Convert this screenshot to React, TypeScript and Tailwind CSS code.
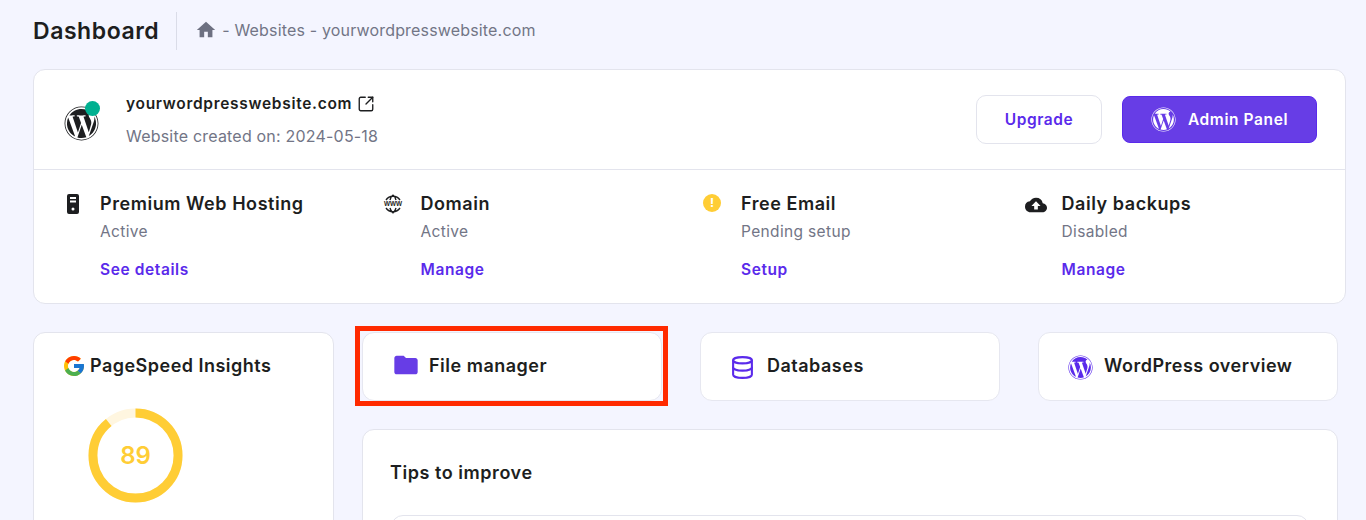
import { FaWordpress } from "react-icons/fa";
import { FcGoogle } from "react-icons/fc";
import { MdHome, MdCloudUpload, MdFolder } from "react-icons/md";
import { Database, SquareArrowOutUpRight } from "lucide-react";

function Server() {
  return (
    <svg width="18" height="20" viewBox="0 0 18 20">
      <path fill="#1d1e20" fillRule="evenodd" d="M5 0h8a2 2 0 0 1 2 2v16a2 2 0 0 1-2 2H5a2 2 0 0 1-2-2V2a2 2 0 0 1 2-2zm1 3v2h6V3H6zm0 3.5v2h6v-2H6zM9 13.5a1.5 1.5 0 1 0 0 3 1.5 1.5 0 0 0 0-3z" />
    </svg>
  );
}

function Www() {
  return (
    <svg width="22" height="20" viewBox="0 0 22 20">
      <path d="M4 6a8.5 8.5 0 0 1 14 0M4 14a8.5 8.5 0 0 0 14 0M8 6c.6-2.4 1.6-4 3-4.800 1.400.8 2.400 2.400 3 4.800M8 14c.6 2.400 1.600 4 3 4.800 1.400-.8 2.400-2.400 3-4.800" fill="none" stroke="#1d1e20" strokeWidth="1.400" />
      <text x="11" y="12.400" textAnchor="middle" fontSize="6.400" fontWeight="800" fill="#1d1e20" fontFamily="Liberation Sans, sans-serif">WWW</text>
    </svg>
  );
}

function Warn() {
  return (
    <div className="flex h-[18px] w-[18px] items-center justify-center rounded-full bg-[#ffcd35] text-[12px] font-bold leading-none text-white">!</div>
  );
}

function Service({ icon, title, status, link, shift }: { icon: React.ReactNode; title: string; status: string; link: string; shift: string }) {
  return (
    <div className="flex">
      <div className={`flex h-[22px] w-[36px] items-start pt-[1px] ${shift}`}>{icon}</div>
      <div className="flex flex-col">
        <div className="text-[18px] font-semibold leading-[22px] tracking-[0.55px] text-[#1d1e20]">{title}</div>
        <div className="mt-[6px] text-[15.500px] leading-[22px] tracking-[0.35px] text-[#727586]">{status}</div>
        <div className="mt-[16px] text-[15.500px] font-semibold leading-[22px] tracking-[0.6px] text-[#5a2aeb]">{link}</div>
      </div>
    </div>
  );
}

function Tile({ icon, label, gap, highlight }: { icon: React.ReactNode; label: string; gap: string; highlight?: boolean }) {
  return (
    <div className="relative h-[69px] w-[300px] rounded-[12px] border border-[#e6e7f0] bg-white">
      <div className={`flex h-full items-center pb-[3px] pl-[29px] ${gap}`}>
        {icon}
        <span className="text-[18px] font-semibold tracking-[0.5px] text-[#1d1e20]">{label}</span>
      </div>
      {highlight && <div className="absolute -left-[8px] -right-[7px] -top-[7px] -bottom-[6px] border-[5px] border-[#ff2a00]" />}
    </div>
  );
}

export default function App() {
  return (
    <div className="h-[520px] w-[1366px] overflow-hidden bg-[#f4f5ff] pl-[33px] pr-[20px] font-['Inter',sans-serif]">
      <div className="flex h-[69px] items-start">
        <div className="mt-[17px] text-[23px] font-semibold leading-[28px] tracking-[0.55px] text-[#1d1e20]">Dashboard</div>
        <div className="ml-[17px] mt-[12px] h-[38px] w-px bg-[#dadce8]" />
        <div className="ml-[18px] mt-[18px] flex items-center text-[#727586]">
          <MdHome size={22} color="#6d7081" />
          <span className="ml-[5px] text-[16px] leading-[24px] tracking-[0.17px]">- Websites - yourwordpresswebsite.com</span>
        </div>
      </div>

      <div className="h-[235px] w-[1313px] rounded-[12px] border border-[#e3e4ed] bg-white">
        <div className="flex h-[100px] border-b border-[#e3e4ed] pl-[30px] pr-[28px]">
          <div className="relative mt-[36px] h-[35px] w-[35px]">
            <div className="absolute left-0 top-0 flex h-[35px] w-[35px] items-center justify-center"><FaWordpress size={35} color="#1d1e20" /></div>
            <div className="absolute right-[-1px] top-[-5px] h-[15px] w-[15px] rounded-full bg-[#00b090]" />
          </div>
          <div className="ml-[27px] mt-[23px]">
            <div className="flex items-center">
              <span className="text-[15.500px] font-semibold leading-[22px] tracking-[0.7px] text-[#1d1e20]">yourwordpresswebsite.com</span>
              <SquareArrowOutUpRight size={18} color="#1d1e20" strokeWidth={1.800} className="ml-[5px]" />
            </div>
            <div className="mt-[10px] text-[16px] leading-[22px] tracking-[0.2px] text-[#727586]">Website created on: 2024-05-18</div>
          </div>
          <div className="ml-auto mt-[25px] flex h-[49px] items-center">
            <div className="flex h-[49px] w-[126px] items-center justify-center rounded-[10px] border border-[#e3e4ed] bg-white text-[15.500px] font-semibold tracking-[0.6px] text-[#5a2aeb]">Upgrade</div>
            <div className="ml-[20px] flex h-[47px] w-[195px] items-center justify-center rounded-[8px] border border-[#5a2aeb] bg-[#673de6] text-[15.500px] font-semibold tracking-[0.6px] text-white">
              <FaWordpress size={25} className="mr-[12px]" />
              Admin Panel
            </div>
          </div>
        </div>
        <div className="grid grid-cols-[320.5px_320.5px_320.5px_1fr] pl-[30px] pt-[23px]">
          <Service shift="" icon={<Server />} title="Premium Web Hosting" status="Active" link="See details" />
          <Service shift="-ml-[3px] pr-[3px] w-[39px]" icon={<Www />} title="Domain" status="Active" link="Manage" />
          <Service shift="-ml-[2px] w-[38px]" icon={<Warn />} title="Free Email" status="Pending setup" link="Setup" />
          <Service shift="-ml-[1px] w-[37px]" icon={<MdCloudUpload size={22} color="#1d1e20" />} title="Daily backups" status="Disabled" link="Manage" />
        </div>
      </div>

      <div className="mt-[28px] flex items-start">
        <div className="h-[300px] w-[301px] rounded-[12px] border border-[#e3e4ed] bg-white pl-[30px] pt-[21px]">
          <div className="flex items-center">
            <FcGoogle size={24} className="-ml-[2px]" />
            <span className="ml-[4px] text-[18px] font-semibold leading-[24px] tracking-[0.48px] text-[#1d1e20]">PageSpeed Insights</span>
          </div>
          <div className="relative ml-[24px] mt-[30px] h-[95px] w-[95px]">
            <svg width="95" height="95" viewBox="0 0 96 96">
              <circle cx="48" cy="48" r="43" fill="none" stroke="#fff6e0" strokeWidth="9" />
              <circle cx="48" cy="48" r="43" fill="none" stroke="#ffcd35" strokeWidth="9" strokeDasharray="240.500 270.200" transform="rotate(-90 48 48)" />
            </svg>
            <div className="absolute inset-0 flex items-center justify-center text-[24px] font-semibold text-[#ffcd35]">89</div>
          </div>
        </div>
        <div className="ml-[28px] w-[976px]">
          <div className="flex justify-between">
            <Tile highlight gap="gap-[9px]" icon={<MdFolder size={28} color="#673de6" />} label="File manager" />
            <Tile gap="gap-[12px]" icon={<Database size={25} color="#5a2aeb" strokeWidth={2} className="mt-[4px]" />} label="Databases" />
            <Tile gap="gap-[11px]" icon={<FaWordpress size={25} color="#5a2aeb" className="mt-[4px]" />} label="WordPress overview" />
          </div>
          <div className="mt-[28px] h-[200px] rounded-[12px] border border-[#e3e4ed] bg-white px-[28px] pt-[30px]">
            <div className="-ml-[1px] text-[18px] font-semibold leading-[26px] tracking-[0.55px] text-[#1d1e20]">Tips to improve</div>
            <div className="mt-[29px] h-[60px] rounded-[12px] border border-[#e3e4ed]" />
          </div>
        </div>
      </div>
    </div>
  );
}
